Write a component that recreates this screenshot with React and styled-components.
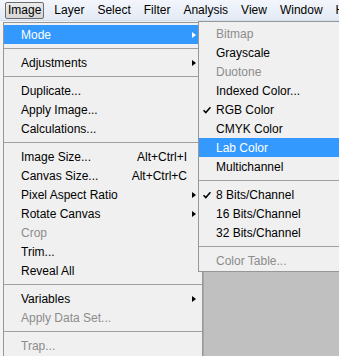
import React from 'react';
import styled, { createGlobalStyle } from 'styled-components';

const GlobalStyle = createGlobalStyle`
    body {
        margin: 0;
        font-family: "Liberation Sans", Arial, sans-serif;
        font-size: 12px;
    }
`;

const Screen = styled.div`
    position: relative;
    width: 339px;
    height: 356px;
    overflow: hidden;
    background: #f6f6f6;
    display: flex;
    flex-direction: column;
`;

const MenuBar = styled.div`
    height: 21px;
    display: flex;
    align-items: center;
    padding-left: 5px;
    background: linear-gradient(#f3f6fb, #e3eaf5);
    border-bottom: 1px solid #d5dfee;
    box-sizing: border-box;
    white-space: nowrap;
`;

const BarItem = styled.div`
    height: 17px;
    line-height: 15px;
    padding: 0 2px;
    margin-right: 7px;
    box-sizing: border-box;
    border: 1px solid ${(p) => (p.$open ? '#6d6d6d' : 'transparent')};
    border-radius: 2px;
    background: ${(p) => (p.$open ? 'linear-gradient(#ebebeb, #d6d6d6)' : 'transparent')};
    color: #000;
`;

const Workspace = styled.div`
    flex: 1;
    display: flex;
`;

const SidePane = styled.div`
    width: 203px;
    background: #f3f3f3;
`;

const Canvas = styled.div`
    flex: 1;
    background: #c0c0c0;
    border-left: 1px solid #a8a8a8;
`;

const Menu = styled.div`
    position: absolute;
    left: ${(p) => p.$left}px;
    top: ${(p) => p.$top}px;
    width: ${(p) => p.$width}px;
    height: ${(p) => (p.$height ? `${p.$height}px` : 'auto')};
    box-sizing: border-box;
    padding: 2px 0 1px 0;
    background: #f0f0f0;
    border: 1px solid #979797;
    z-index: ${(p) => p.$z};
`;

const Row = styled.div`
    height: 19px;
    display: flex;
    align-items: center;
    padding-right: 6px;
    background: ${(p) => (p.$active ? '#3399ff' : 'transparent')};
    color: ${(p) => (p.$active ? '#fff' : p.$disabled ? '#8c8c8c' : '#000')};
    white-space: nowrap;
`;

const CheckCol = styled.div`
    width: ${(p) => p.$width}px;
    flex: none;
    display: flex;
    align-items: center;
    justify-content: flex-start;
    padding-left: 4px;
    box-sizing: border-box;
`;

const Label = styled.span`
    flex: 1;
`;

const Shortcut = styled.span`
    margin-right: 5px;
`;

const Arrow = styled.span`
    width: 0;
    height: 0;
    border-top: 3.5px solid transparent;
    border-bottom: 3.5px solid transparent;
    border-left: 4px solid ${(p) => (p.$active ? '#fff' : '#000')};
    visibility: ${(p) => (p.$show ? 'visible' : 'hidden')};
`;

const Separator = styled.div`
    height: 9px;
    display: flex;
    align-items: center;

    &::after {
        content: '';
        flex: 1;
        height: 1px;
        background: #a0a0a0;
    }
`;

const Check = () => (
    <svg width="8" height="8" viewBox="0 0 8 8">
        <path d="M0.5 4.2 L2.8 6.5 L7.5 1.2" fill="none" stroke="#000" strokeWidth="1.6" />
    </svg>
);

const imageMenu = [
    { label: 'Mode', sub: true, active: true },
    '-',
    { label: 'Adjustments', sub: true },
    '-',
    { label: 'Duplicate...' },
    { label: 'Apply Image...' },
    { label: 'Calculations...' },
    '-',
    { label: 'Image Size...', key: 'Alt+Ctrl+I' },
    { label: 'Canvas Size...', key: 'Alt+Ctrl+C' },
    { label: 'Pixel Aspect Ratio', sub: true },
    { label: 'Rotate Canvas', sub: true },
    { label: 'Crop', disabled: true },
    { label: 'Trim...' },
    { label: 'Reveal All' },
    '-',
    { label: 'Variables', sub: true },
    { label: 'Apply Data Set...', disabled: true },
    '-',
    { label: 'Trap...', disabled: true },
];

const modeMenu = [
    { label: 'Bitmap', disabled: true },
    { label: 'Grayscale' },
    { label: 'Duotone', disabled: true },
    { label: 'Indexed Color...' },
    { label: 'RGB Color', checked: true },
    { label: 'CMYK Color' },
    { label: 'Lab Color', active: true },
    { label: 'Multichannel' },
    '-',
    { label: '8 Bits/Channel', checked: true },
    { label: '16 Bits/Channel' },
    { label: '32 Bits/Channel' },
    '-',
    { label: 'Color Table...', disabled: true },
];

const MenuRows = ({ items, gutter }) =>
    items.map((item, i) =>
        item === '-' ? (
            <Separator key={i} />
        ) : (
            <Row key={i} $active={item.active} $disabled={item.disabled}>
                <CheckCol $width={gutter}>{item.checked && <Check />}</CheckCol>
                <Label>{item.label}</Label>
                {item.key && <Shortcut>{item.key}</Shortcut>}
                <Arrow $show={item.sub} $active={item.active} />
            </Row>
        )
    );

const App = () => {
    const bar = ['Image', 'Layer', 'Select', 'Filter', 'Analysis', 'View', 'Window', 'Help'];

    return (
        <>
            <GlobalStyle />
            <Screen>
                <MenuBar>
                    {bar.map((name, i) => (
                        <BarItem key={name} $open={i === 0}>
                            {name}
                        </BarItem>
                    ))}
                </MenuBar>
                <Workspace>
                    <SidePane />
                    <Canvas />
                </Workspace>

                <Menu $left={3} $top={22} $width={200} $height={340} $z={1}>
                    <MenuRows items={imageMenu} gutter={17} />
                </Menu>
                <Menu $left={198} $top={21} $width={150} $z={2}>
                    <MenuRows items={modeMenu} gutter={17} />
                </Menu>
            </Screen>
        </>
    );
};

export default App;
